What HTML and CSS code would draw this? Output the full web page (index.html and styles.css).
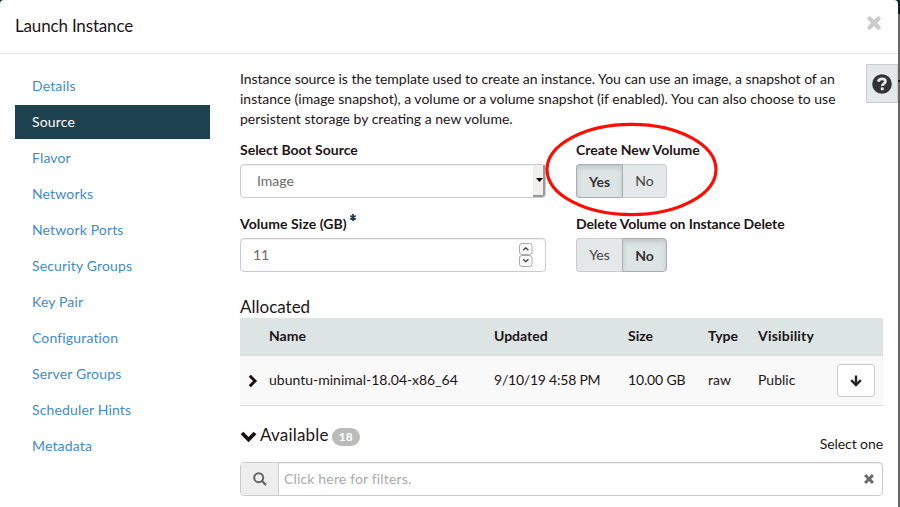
FILE: index.html
```html
<!DOCTYPE html>
<html lang="en">
<head>
<meta charset="utf-8">
<title>Launch Instance</title>
<link rel="stylesheet" href="styles.css">
</head>
<body>
<div class="modal">
  <header class="modal-header">
    <h1>Launch Instance</h1>
    <svg class="close" width="16" height="16" viewBox="0 0 16 16"><path d="M3.5 3.5L12.5 12.5M12.5 3.5L3.5 12.5" stroke="#ccc" stroke-width="4.4" stroke-linecap="round"/></svg>
  </header>
  <div class="modal-body">
    <nav class="steps">
      <a>Details</a>
      <a class="active">Source</a>
      <a>Flavor</a>
      <a>Networks</a>
      <a>Network Ports</a>
      <a>Security Groups</a>
      <a>Key Pair</a>
      <a>Configuration</a>
      <a>Server Groups</a>
      <a>Scheduler Hints</a>
      <a>Metadata</a>
    </nav>
    <main class="content">
      <p class="intro"><span class="first">Instance source is the template used to create an instance. You can use an image, a snapshot of an</span><br><span>instance (image snapshot), a volume or a volume snapshot (if enabled). You can also choose to use</span><br><span>persistent storage by creating a new volume.</span></p>
      <div class="form">
        <div class="field">
          <label><span>Select Boot Source</span></label>
          <div class="control select"><span>Image</span><i class="drop"><svg width="7" height="4" viewBox="0 0 7 4"><path d="M0 0H7L3.5 4Z"/></svg></i></div>
        </div>
        <div class="field">
          <label><span>Create New Volume</span></label>
          <div class="toggle"><b class="yes on">Yes</b><b class="no">No</b></div>
        </div>
        <div class="field">
          <label><span class="size-label">Volume Size (GB)</span><svg class="star" width="6" height="7" viewBox="0 0 6 7"><path d="M3 0V7M.2 1.7L5.8 5.3M5.8 1.7L.2 5.3" stroke="#1e4150" stroke-width="1.7"/></svg></label>
          <div class="control number"><span>11</span>
            <div class="spin">
              <svg width="14" height="12" viewBox="0 0 14 12"><rect x=".5" y=".5" width="12.5" height="11" rx="2.5" fill="#fdfdfd" stroke="#aaa"/><path d="M4.2 7.3L6.8 4.9L9.4 7.3" fill="none" stroke="#333" stroke-width="1.2"/></svg>
              <svg width="14" height="12" viewBox="0 0 14 12"><rect x=".5" y=".5" width="12.5" height="11" rx="2.5" fill="#fdfdfd" stroke="#aaa"/><path d="M4.2 4.2L6.8 6.6L9.4 4.2" fill="none" stroke="#333" stroke-width="1.2"/></svg>
            </div>
          </div>
        </div>
        <div class="field">
          <label><span class="delete-label">Delete Volume on Instance Delete</span></label>
          <div class="toggle"><b class="yes">Yes</b><b class="no on">No</b></div>
        </div>
      </div>
      <h2 class="allocated"><span>Allocated</span></h2>
      <div class="table">
        <div class="row head"><span></span><span>Name</span><span>Updated</span><span>Size</span><span>Type</span><span class="visibility">Visibility</span></div>
        <div class="row data">
          <svg width="10" height="14" viewBox="0 0 10 14"><path d="M1.8 1.8L7 7L1.8 12.2" fill="none" stroke="#161214" stroke-width="3"/></svg>
          <span>ubuntu-minimal-18.04-x86_64</span><span class="date">9/10/19 4:58 PM</span><span class="size">10.00 GB</span><span>raw</span><span>Public</span>
          <div class="move"><svg width="12" height="12" viewBox="0 0 12 12"><path d="M6 .5V10M1.2 5.2L6 10L10.8 5.2" fill="none" stroke="#222" stroke-width="2.4"/></svg></div>
        </div>
      </div>
      <div class="available">
        <svg width="17" height="12" viewBox="0 0 17 12"><path d="M2 2L8.5 8.5L15 2" fill="none" stroke="#161214" stroke-width="3.8"/></svg>
        <h2><span>Available</span></h2>
        <span class="badge">18</span>
        <span class="pick">Select one</span>
      </div>
      <div class="search">
        <div class="lens"><svg width="14" height="14" viewBox="0 0 14 14"><circle cx="5.7" cy="5.7" r="4.5" fill="none" stroke="#666" stroke-width="2"/><path d="M9 9L12.4 12.4" stroke="#666" stroke-width="2.2" stroke-linecap="round"/></svg></div>
        <span class="hint">Click here for filters.</span>
        <svg class="clear" width="10" height="10" viewBox="0 0 10 10"><path d="M2.1 2.1L7.9 7.9M7.9 2.1L2.1 7.9" stroke="#6b6b6b" stroke-width="2.9" stroke-linecap="square"/></svg>
      </div>
    </main>
  </div>
</div>
<div class="backdrop"><i class="navbar"></i><i class="line"></i></div>
<div class="help"><svg width="20" height="20" viewBox="0 0 20 20"><circle cx="10" cy="10" r="9.8" fill="#333"/><path d="M6.2 7.6C6.7 5.5 8.2 4.8 10.1 4.8C12 4.8 13.4 5.9 13.4 7.6C13.4 9.7 10.3 9.7 10.3 12" fill="none" stroke="#e4e8e8" stroke-width="2.8"/><path d="M8.8 13.4H11.7V16.2H8.8Z" fill="#e4e8e8"/></svg></div>
<svg class="mark" width="174" height="95" viewBox="0 0 174 95"><ellipse cx="86.5" cy="47.5" rx="84.5" ry="45.2" fill="none" stroke="#ff0b00" stroke-width="3.2"/></svg>
</body>
</html>
```
FILE: styles.css
```css
* { box-sizing: border-box; }
body {
  margin: 0;
  height: 507px;
  display: flex;
  overflow: hidden;
  background: #122c35;
  color: #1c1518;
  font: 14px/20px Lato, sans-serif;
}
h1, h2, p { margin: 0; font-weight: 400; }
svg { display: block; flex: none; }
.modal { width: 898px; height: 507px; background: #fff; border-radius: 4px 4px 0 0; }
.modal-header {
  height: 54px;
  padding: 0 16px 0 15px;
  display: flex;
  align-items: center;
  justify-content: space-between;
  border-bottom: 1px solid #e2e5e5;
}
h1 { margin-top: -1px; font-size: 17px; letter-spacing: -.17px; }
.close { margin-top: -7px; }
.modal-body { display: flex; padding: 15px 15px 0; gap: 30px; }
.steps { width: 195px; display: flex; flex-direction: column; gap: 2px; }
.steps a { height: 34px; padding: 7px 17px; color: #428bca; letter-spacing: .15px; }
.steps .active { background: #1e4150; color: #fff; }
.content { width: 643px; }
.intro { height: 71px; white-space: nowrap; }
.first { letter-spacing: -.04px; }
.form { display: grid; grid-template-columns: 306px 1fr; column-gap: 30px; row-gap: 16px; }
label { display: flex; height: 24px; font-weight: 700; }
.size-label { letter-spacing: .06px; }
.delete-label { letter-spacing: -.1px; }
.star { margin: 0 0 0 3px; }
.control {
  height: 34px;
  display: flex;
  align-items: center;
  justify-content: space-between;
  border: 1px solid #ccc;
  border-radius: 4px;
  color: #6b6b6b;
  box-shadow: inset 0 1px 1px rgba(0,0,0,.075);
}
.select { padding-left: 16px; }
.drop {
  width: 12px;
  height: 32px;
  display: flex;
  align-items: center;
  justify-content: flex-end;
  background: #f0efee;
  border-right: 2px solid #999;
  border-bottom: 2px solid #999;
  border-radius: 0 0 3px 0;
}
.drop svg { margin-right: 0; }
.number { padding: 0 12px; }
.spin { display: flex; flex-direction: column; }
.toggle { display: flex; height: 34px; }
.toggle b {
  border: 1px solid #c9cccc;
  background: #e4e8e8;
  color: #444;
  font-weight: 400;
  text-align: center;
  line-height: 32px;
}
.yes { width: 46px; border-right: 0 !important; border-radius: 4px 0 0 4px; }
.no { width: 45px; border-radius: 0 4px 4px 0; }
.toggle .on {
  background: #dde4e4;
  border-color: #aaadad;
  color: #333;
  font-weight: 700;
  line-height: 34px;
  box-shadow: inset 0 3px 5px rgba(0,0,0,.125);
}
.yes.on + .no { border-left-color: #aaadad; }
h2 { font-size: 17px; line-height: 20px; }
.allocated { margin-top: 25px; height: 21px; }
.row {
  display: grid;
  grid-template-columns: 21px 225px 134px 80px 50px 79px 38px;
  align-items: center;
  padding-left: 8px;
}
.head { height: 38px; background: #dde4e4; border-bottom: 2px solid #ddd; font-weight: 700; }
.visibility { letter-spacing: .2px; }
.data { height: 50px; background: #f9f9f9; border-bottom: 1px solid #ddd; }
.data > span { margin-top: -1px; }
.date { letter-spacing: -.22px; }
.size { letter-spacing: -.15px; }
.move {
  height: 33px;
  display: flex;
  align-items: center;
  justify-content: center;
  background: #fff;
  border: 1px solid #ccc;
  border-radius: 3px;
}
.available { height: 56px; padding-top: 19px; display: flex; align-items: flex-start; }
.available > svg { margin: 6px 3px 0 0; }
.available h2 { letter-spacing: .2px; }
.badge {
  margin: 3px 0 0 3px;
  width: 28px;
  height: 18px;
  border-radius: 9px;
  background: #bbb;
  color: #fff;
  font-size: 12px;
  line-height: 18px;
  font-weight: 700;
  text-align: center;
}
.pick { margin: 9px 0 0 auto; letter-spacing: -.08px; }
.search {
  height: 34px;
  display: flex;
  align-items: center;
  border: 1px solid #ccc;
  border-radius: 4px;
  box-shadow: inset 0 1px 1px rgba(0,0,0,.075);
}
.lens {
  width: 38px;
  height: 32px;
  display: flex;
  align-items: center;
  justify-content: center;
  background: #eee;
  border-right: 1px solid #ccc;
  border-radius: 3px 0 0 3px;
}
.hint { padding-left: 5px; color: #aaa; letter-spacing: .16px; }
.clear { margin: 0 8px 0 auto; }
.backdrop { width: 2px; height: 507px; background: #666; }
.backdrop i { display: block; }
.navbar { height: 14px; background: #0b2229; }
.line { height: 2px; margin-top: 66px; background: #222; }
.help {
  position: absolute;
  left: 866px;
  top: 64px;
  width: 32px;
  height: 39px;
  display: flex;
  align-items: center;
  justify-content: center;
  background: #e4e8e8;
  border: 1px solid #ccc;
}
.mark { position: absolute; left: 545px; top: 122px; }
```
